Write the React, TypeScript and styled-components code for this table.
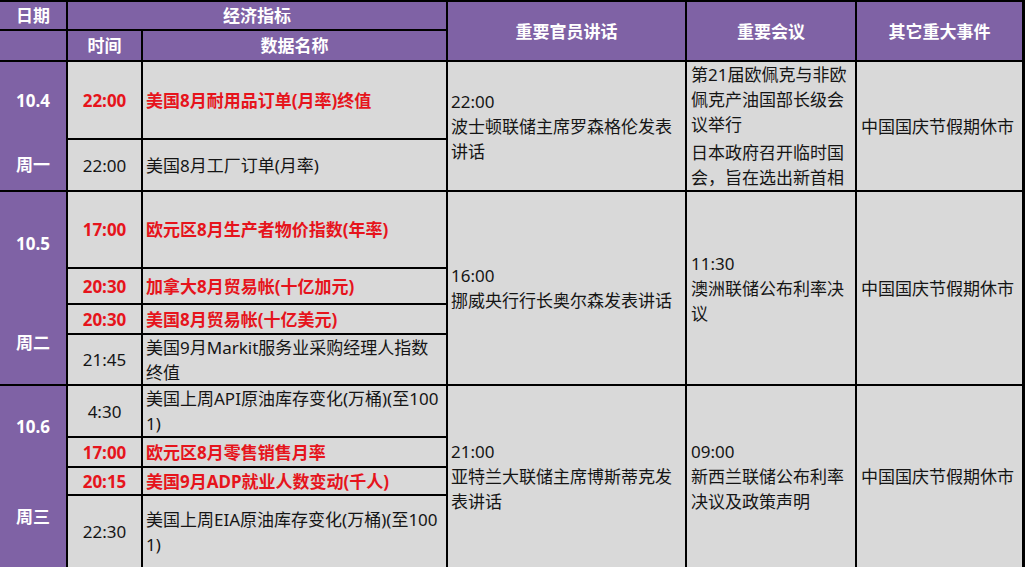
import React from "react";
import styled, { createGlobalStyle } from "styled-components";

const GlobalStyle = createGlobalStyle`
  html, body {
    margin: 0;
    padding: 0;
    background: #ffffff;
  }
  body {
    font-family: "Noto Sans", "Noto Sans CJK SC", sans-serif;
  }
`;

const PURPLE = "#7f62a5";
const GRAY = "#d9d9d9";
const RED = "#e6141c";

const Table = styled.div`
  width: 1025px;
  height: 567px;
  box-sizing: border-box;
  overflow: hidden;
  display: grid;
  grid-template-columns: 66px 73px 303px 237px 168px 165px;
  grid-template-rows: 27px 29px 76px 50px 75px 34px 28px 49px 50px 28px 26px 71px;
  gap: 2px;
  padding: 2px 3px 0 0;
  background: #000;
  font-size: 17px;
  line-height: 25px;
`;

const HeadCell = styled.div<{ $col: string; $row: string }>`
  grid-column: ${(p) => p.$col};
  grid-row: ${(p) => p.$row};
  background: ${PURPLE};
  color: #fff;
  font-weight: 700;
  display: flex;
  align-items: center;
  justify-content: center;
`;

const DateCell = styled.div<{ $row: string; $top: number; $bottom: number }>`
  grid-column: 1;
  grid-row: ${(p) => p.$row};
  background: ${PURPLE};
  color: #fff;
  font-weight: 700;
  display: flex;
  flex-direction: column;
  align-items: center;
  justify-content: space-between;
  padding: ${(p) => `${p.$top}px 0 ${p.$bottom}px`};
`;

const TimeCell = styled.div<{ $row: number; $hot?: boolean }>`
  grid-column: 2;
  grid-row: ${(p) => p.$row};
  background: ${GRAY};
  color: ${(p) => (p.$hot ? RED : "#151515")};
  font-weight: ${(p) => (p.$hot ? 700 : 400)};
  display: flex;
  align-items: center;
  justify-content: center;
`;

const NameCell = styled.div<{ $row: number; $hot?: boolean }>`
  grid-column: 3;
  grid-row: ${(p) => p.$row};
  background: ${GRAY};
  color: ${(p) => (p.$hot ? RED : "#151515")};
  font-weight: ${(p) => (p.$hot ? 700 : 400)};
  display: flex;
  flex-direction: column;
  justify-content: center;
  padding-left: 3px;
  white-space: nowrap;
  overflow: hidden;
`;

const TextCell = styled.div<{ $col: number; $row: string; $pad: number }>`
  grid-column: ${(p) => p.$col};
  grid-row: ${(p) => p.$row};
  background: ${GRAY};
  color: #151515;
  display: flex;
  flex-direction: column;
  justify-content: center;
  padding-left: ${(p) => p.$pad}px;
  white-space: nowrap;
  overflow: hidden;
`;

const Para = styled.div`
  & + & {
    margin-top: 3px;
  }
`;

type Item = { time: string; name: string[]; hot?: boolean };

type Day = {
  date: string;
  week: string;
  first: number;
  pad: [number, number];
  items: Item[];
  speech: string[];
  meeting: string[][];
  other: string;
};

const days: Day[] = [
  {
    date: "10.4",
    week: "周一",
    first: 3,
    pad: [26, 13],
    items: [
      { time: "22:00", name: ["美国8月耐用品订单(月率)终值"], hot: true },
      { time: "22:00", name: ["美国8月工厂订单(月率)"] },
    ],
    speech: ["22:00", "波士顿联储主席罗森格伦发表", "讲话"],
    meeting: [
      ["第21届欧佩克与非欧", "佩克产油国部长级会", "议举行"],
      ["日本政府召开临时国", "会，旨在选出新首相"],
    ],
    other: "中国国庆节假期休市",
  },
  {
    date: "10.5",
    week: "周二",
    first: 5,
    pad: [39, 29],
    items: [
      { time: "17:00", name: ["欧元区8月生产者物价指数(年率)"], hot: true },
      { time: "20:30", name: ["加拿大8月贸易帐(十亿加元)"], hot: true },
      { time: "20:30", name: ["美国8月贸易帐(十亿美元)"], hot: true },
      { time: "21:45", name: ["美国9月Markit服务业采购经理人指数", "终值"] },
    ],
    speech: ["16:00", "挪威央行行长奥尔森发表讲话"],
    meeting: [["11:30", "澳洲联储公布利率决", "议"]],
    other: "中国国庆节假期休市",
  },
  {
    date: "10.6",
    week: "周三",
    first: 9,
    pad: [28, 38],
    items: [
      { time: "4:30", name: ["美国上周API原油库存变化(万桶)(至100", "1)"] },
      { time: "17:00", name: ["欧元区8月零售销售月率"], hot: true },
      { time: "20:15", name: ["美国9月ADP就业人数变动(千人)"], hot: true },
      { time: "22:30", name: ["美国上周EIA原油库存变化(万桶)(至100", "1)"] },
    ],
    speech: ["21:00", "亚特兰大联储主席博斯蒂克发", "表讲话"],
    meeting: [["09:00", "新西兰联储公布利率", "决议及政策声明"]],
    other: "中国国庆节假期休市",
  },
];

function Lines({ lines }: { lines: string[] }) {
  return (
    <>
      {lines.map((l, i) => (
        <div key={i}>{l}</div>
      ))}
    </>
  );
}

export default function App() {
  return (
    <>
      <GlobalStyle />
      <Table>
        <HeadCell $col="1" $row="1">日期</HeadCell>
        <HeadCell $col="2 / 4" $row="1">经济指标</HeadCell>
        <HeadCell $col="4" $row="1 / 3">重要官员讲话</HeadCell>
        <HeadCell $col="5" $row="1 / 3">重要会议</HeadCell>
        <HeadCell $col="6" $row="1 / 3">其它重大事件</HeadCell>
        <HeadCell $col="1" $row="2" />
        <HeadCell $col="2" $row="2">时间</HeadCell>
        <HeadCell $col="3" $row="2">数据名称</HeadCell>

        {days.map((d) => {
          const span = `${d.first} / ${d.first + d.items.length}`;
          return (
            <React.Fragment key={d.date}>
              <DateCell $row={span} $top={d.pad[0]} $bottom={d.pad[1]}>
                <div>{d.date}</div>
                <div>{d.week}</div>
              </DateCell>
              {d.items.map((it, i) => (
                <React.Fragment key={i}>
                  <TimeCell $row={d.first + i} $hot={it.hot}>
                    {it.time}
                  </TimeCell>
                  <NameCell $row={d.first + i} $hot={it.hot}>
                    <Lines lines={it.name} />
                  </NameCell>
                </React.Fragment>
              ))}
              <TextCell $col={4} $row={span} $pad={3}>
                <Lines lines={d.speech} />
              </TextCell>
              <TextCell $col={5} $row={span} $pad={4}>
                {d.meeting.map((m, i) => (
                  <Para key={i}>
                    <Lines lines={m} />
                  </Para>
                ))}
              </TextCell>
              <TextCell $col={6} $row={span} $pad={4}>
                {d.other}
              </TextCell>
            </React.Fragment>
          );
        })}
      </Table>
    </>
  );
}
